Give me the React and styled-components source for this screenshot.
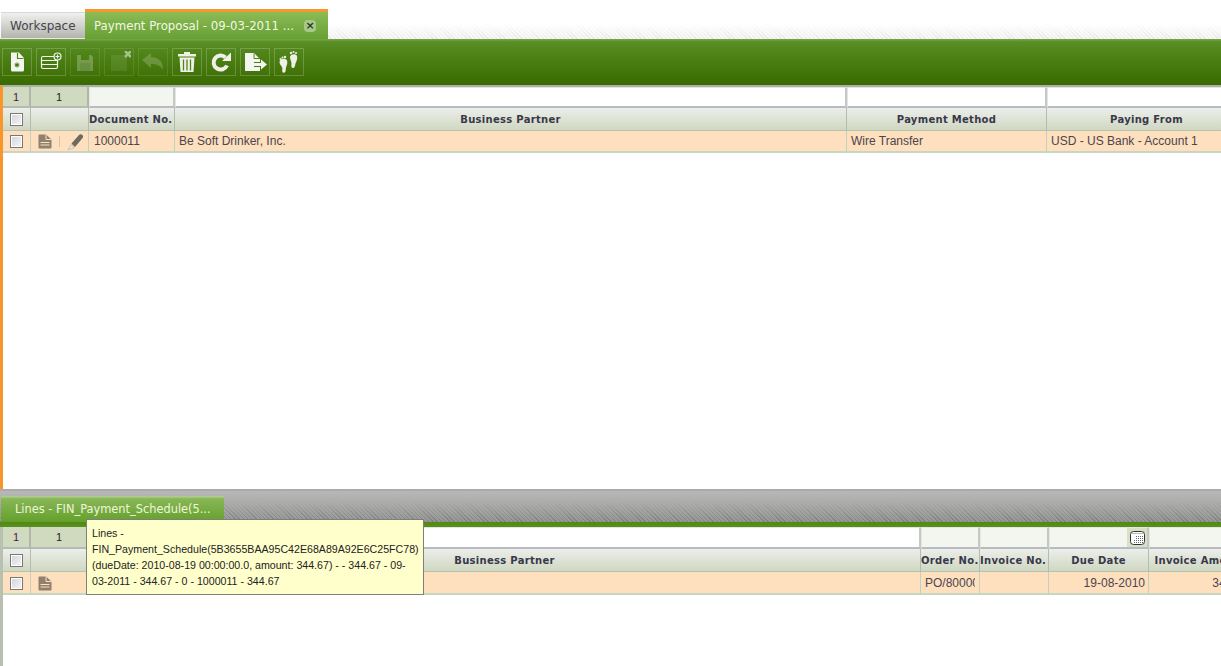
import React from 'react'
import styled, { createGlobalStyle } from 'styled-components'

const GlobalStyle = createGlobalStyle`
html, body { margin: 0; padding: 0; background: #fff; overflow: hidden; }
body { font-family: "Liberation Sans", Arial, sans-serif; }
`

const Page = styled.div`
  width: 1221px;
  height: 666px;
  position: relative;
  overflow: hidden;
  display: flex;
  flex-direction: column;
`

const TabBar = styled.div`
  height: 39px;
  flex: none;
  display: flex;
  align-items: flex-end;
  padding-left: 1px;
  box-sizing: border-box;
  background: linear-gradient(#fff 24px, rgba(255,255,255,0) 39px),
    repeating-linear-gradient(45deg, #e6e6e6 0 1px, #f6f6f6 1px 3px);
`

const Tab = styled.div`
  font-family: "DejaVu Sans", sans-serif;
  font-size: 12px;
  white-space: nowrap;
  display: flex;
  align-items: center;
  box-sizing: border-box;
`

const GrayTab = styled(Tab)`
  width: 84px;
  height: 27px;
  padding-left: 9px;
  color: #45454f;
  background: linear-gradient(#f0f0ee, #b4b4ae);
  border-top: 1px solid #d8d8d8;
  border-bottom: 1px solid #e8e8e8;
`

const ActiveTab = styled(Tab)`
  width: 243px;
  height: 30px;
  padding: 0 12px 0 9px;
  font-size: 11.75px;
  color: #f2f8e2;
  background: linear-gradient(#8dbb55, #66a035);
  border-top: 3px solid #f7962b;
  justify-content: space-between;
`

const CloseBtn = styled.span`
  width: 12px;
  height: 12px;
  border-radius: 4px;
  background: #a5c98a;
  color: #2c3a20;
  font-size: 11px;
  font-weight: 700;
  display: flex;
  align-items: center;
  justify-content: center;
`

const Toolbar = styled.div`
  height: 46px;
  flex: none;
  box-sizing: border-box;
  padding: 9px 0 0 2px;
  display: flex;
  gap: 4px;
  background: linear-gradient(#7aa844 0, #5a8e28 3px, #4f8418 14px, #3a6a00 46px);
`

const ToolBtn = styled.div`
  width: 30px;
  height: 28px;
  box-sizing: border-box;
  border: 1px solid ${p => (p.$dim ? 'rgba(255,255,255,.1)' : 'rgba(255,255,255,.2)')};
  display: flex;
  align-items: center;
  justify-content: center;
  svg { opacity: ${p => p.$dim || 1}; }
`

const TopPane = styled.div`
  height: 404px;
  flex: none;
  box-sizing: border-box;
  border-left: 3px solid #f7962b;
  border-top: 2px solid #a9b0a6;
  background: #fff;
`

const Row = styled.div`
  display: grid;
  grid-template-columns: ${p => p.$cols};
  height: ${p => p.$h}px;
  box-sizing: border-box;
  && > * { padding-top: ${p => (p.$nudge ? '1px' : '0')}; }
`

const CountCell = styled.div`
  background: #d0dabf;
  border-right: 2px solid #b0b6ae;
  border-bottom: 2px solid #b4bab4;
  color: ${p => (p.$dark ? '#222' : '#5a1050')};
  font-size: 11px;
  display: flex;
  align-items: center;
  justify-content: center;
`

const FilterCell = styled.div`
  box-sizing: border-box;
  background: ${p => (p.$on ? '#f3f6ee' : '#fff')};
  border: 1px solid #e4e6e2;
  border-right: 2px solid #c6c8c6;
  border-bottom: 2px solid #b8bcc0;
  display: flex;
  align-items: stretch;
  justify-content: flex-end;
`

const CalendarBox = styled.span`
  width: 20px;
  background: #d8e0c8;
  display: flex;
  align-items: center;
  justify-content: center;
`

const HeadCell = styled.div`
  background: linear-gradient(#eceeea, #cfd8c2);
  border-right: 1px solid #b4bcb0;
  border-bottom: 1px solid #b4c2ae;
  font-family: "DejaVu Sans", sans-serif;
  font-weight: 700;
  font-size: 10px;
  letter-spacing: 0.3px;
  color: #38384a;
  white-space: nowrap;
  overflow: hidden;
  display: flex;
  align-items: center;
  justify-content: ${p => (p.$left ? 'flex-start' : 'center')};
  box-sizing: border-box;
`

const DataCell = styled.div`
  background: #fedfbe;
  border-right: 1px solid #c4d0bc;
  border-bottom: 2px solid #c6d6c0;
  color: #4a4650;
  font-size: 12px;
  white-space: nowrap;
  overflow: hidden;
  display: flex;
  align-items: center;
  justify-content: ${p => (p.$right ? 'flex-end' : 'flex-start')};
  padding-right: ${p => (p.$right ? '3px' : '0')};
  padding-left: ${p => p.$pad || 0}px;
  box-sizing: border-box;
`

const ClippedText = styled.span`
  width: 50px;
  overflow: hidden;
`

const CheckWrap = styled.div`
  width: 100%;
  display: flex;
  align-items: center;
  justify-content: center;
  height: 100%;
`

const CheckBox = styled.span`
  width: 13px;
  height: 13px;
  box-sizing: border-box;
  border: 1px solid #77777c;
  background: linear-gradient(135deg, #d2d4d8, #f6f6f8);
  box-shadow: inset 0 0 0 1px #fff;
`

const IconCell = styled(DataCell)`
  gap: 7px;
  padding-left: 7px;
`

const Sep = styled.span`
  width: 1px;
  height: 11px;
  background: #d8c4ac;
`

const SplitBar = styled.div`
  height: 33px;
  flex: none;
  box-sizing: border-box;
  border-top: 2px solid #aaa;
  padding-left: 1px;
  display: flex;
  align-items: flex-end;
  background: linear-gradient(#b8b8b6 0, rgba(176,176,174,.9) 35%, rgba(140,140,140,0) 100%),
    repeating-linear-gradient(45deg, #7e7e7e 0 1px, #979797 1px 3px);
`

const LinesTab = styled(Tab)`
  width: 223px;
  height: 26px;
  flex: none;
  padding-left: 14px;
  font-size: 11.4px;
  color: #eef6dc;
  background: linear-gradient(#b4d098 0, #88b656 3px, #64a02c);
`

const GreenStrip = styled.div`
  height: 5px;
  flex: none;
  background: linear-gradient(#4f8a12, #5b8f20);
`

const BottomPane = styled.div`
  flex: 1;
  box-sizing: border-box;
  border-left: 3px solid #b8c0b0;
  background: #fff;
`

const Tooltip = styled.div`
  position: absolute;
  left: 86px;
  top: 519px;
  width: 338px;
  height: 76px;
  box-sizing: border-box;
  background: #ffffcc;
  border: 1px solid #7f7f7f;
  padding: 5px 0 0 5px;
  font-size: 10.63px;
  line-height: 16px;
  color: #222;
  white-space: nowrap;
`

const NewDocIcon = () => (
  <svg width="16" height="20" viewBox="0 0 16 20">
    <path d="M2 0.500h8l5 5.500v12a1.500 1.500 0 0 1-1.500 1.500h-10A1.500 1.500 0 0 1 2 18z" fill="#f4f4f0" />
    <path d="M8.500 1v5.500h6" fill="none" stroke="#4f8418" strokeWidth="1.200" />
    <path d="M8 10.500v5M5.800 11.800l4.400 2.500M10.200 11.800l-4.400 2.500" stroke="#3f7a10" strokeWidth="1.100" />
  </svg>
)

const RecordIcon = () => (
  <svg width="14" height="15" viewBox="0 0 14 15">
    <path d="M0.500 1.500a1 1 0 0 1 1-1h6.500l5.500 5v8a1 1 0 0 1-1 1h-11a1 1 0 0 1-1-1z" fill="#8f8070" />
    <path d="M8 0.500v5h5.500" fill="none" stroke="#fedfbe" />
    <path d="M2.500 8.500h9M2.500 11h9" stroke="#fedfbe" />
  </svg>
)

const FormIcon = () => (
  <svg width="24" height="22" viewBox="0 0 24 22">
    <rect x="2.500" y="5.500" width="16" height="12" rx="1.500" fill="none" stroke="#f4f4f0" strokeWidth="1.200" />
    <path d="M3 9.500h15M3 13.500h15" stroke="#f4f4f0" strokeWidth="1.200" />
    <circle cx="18.500" cy="5.500" r="3.500" fill="#4f8418" stroke="#f4f4f0" strokeWidth="1.200" />
    <path d="M18.500 3.500v4M16.500 5.500h4" stroke="#f4f4f0" />
  </svg>
)

const SaveIcon = () => (
  <svg width="24" height="22" viewBox="0 0 24 22">
    <path d="M4 4h14l2 2v14H4z" fill="#e8e8e0" />
    <rect x="8" y="4" width="8" height="5" fill="#4f8418" />
    <rect x="7" y="12" width="10" height="8" fill="#c8c8c0" />
  </svg>
)

const SaveCloseIcon = () => (
  <svg width="24" height="22" viewBox="0 0 24 22">
    <path d="M4 4h14l2 2v14H4z" fill="#e8e8e0" opacity=".2" />
    <path d="M18 0l6 6M24 0l-6 6" stroke="#fff" strokeWidth="2.500" />
  </svg>
)

const UndoIcon = () => (
  <svg width="24" height="22" viewBox="0 0 24 22">
    <path d="M1 9l9-7v4c8 0 12 5 12 13-2-4-6-6-12-6v4z" fill="#e8e8e0" />
  </svg>
)

const TrashIcon = () => (
  <svg width="20" height="22" viewBox="0 0 20 22">
    <path d="M1 3h18v2.400H1zM7 1h6v2H7z" fill="#f0f0e8" />
    <path d="M2.500 6.500h15l-1 14.500h-13z" fill="#f0f0e8" />
    <path d="M6.500 8.500v11M10 8.500v11M13.500 8.500v11" stroke="#4f8418" strokeWidth="1.300" />
  </svg>
)

const RefreshIcon = () => (
  <svg width="22" height="22" viewBox="0 0 22 22">
    <path d="M17 14.500A7 7 0 1 1 15.500 6.500" fill="none" stroke="#f0f0e8" strokeWidth="4" />
    <path d="M12 10h9V1.500z" fill="#f0f0e8" />
  </svg>
)

const ExportIcon = () => (
  <svg width="24" height="22" viewBox="0 0 24 22">
    <path d="M2 2h9l6 6v3h-6v5h6v4H2z" fill="#f4f4f0" />
    <path d="M11 2.500v5h6" fill="none" stroke="#4f8418" />
    <path d="M10 12h8V8.500l6 5-6 5V15h-8z" fill="#f4f4f0" />
  </svg>
)

const FeetIcon = () => (
  <svg width="22" height="24" viewBox="0 0 22 24">
    <path d="M1.500 12c0-3 6-4.500 7.500-1.500 1 2.500-.5 5-1 7-.4 2 .2 5-2 5.200-2.500.2-1.500-3-1.700-5C3.500 15.800 1.500 14.500 1.500 12z" fill="#f0f0e8" />
    <path d="M12 7c0-3 6-4 7-1 .8 3-.8 5.500-1.500 7.500-.5 2-.5 4.500-2.500 4.500-2.300 0-1.400-3-1.600-5C13.200 10.800 12 9 12 7z" fill="#f0f0e8" />
    <g fill="#f0f0e8">
      <circle cx="2.500" cy="9" r="1" />
      <circle cx="4.500" cy="7.500" r="1" />
      <circle cx="7" cy="7" r="1.200" />
      <circle cx="13" cy="3" r="1.200" />
      <circle cx="15.500" cy="2" r="1" />
      <circle cx="18" cy="3" r="1" />
    </g>
  </svg>
)

const PencilIcon = () => (
  <svg width="17" height="17" viewBox="0 0 17 17">
    <path d="M4.500 10.500l7.500-8.500c1-1 2.500-.8 3.400 0s1 2.200 0 3.300l-7.400 8.700z" fill="#6d6a62" />
    <path d="M4 11.500l3.500 3L1 17z" fill="#efe6d6" stroke="#a8a294" strokeWidth=".5" />
  </svg>
)

const CalendarIcon = () => (
  <svg width="15" height="14" viewBox="0 0 15 14">
    <rect x="0.500" y="0.500" width="14" height="13" rx="3" fill="#fff" stroke="#333" />
    <path d="M1 2.500h13" stroke="#bbb" />
    <path d="M6 5.500h7M6 7.500h7M4 9.500h9M4 11.500h9" stroke="#666" strokeDasharray="1 1" />
  </svg>
)

const topCols = '28px 58px 86px 672px 200px 200px'
const bottomCols = '28px 58px 832px 59px 69px 100px 104px'

const toolIcons = [
  { id: 'new', icon: <NewDocIcon /> },
  { id: 'form', icon: <FormIcon /> },
  { id: 'save', icon: <SaveIcon />, dim: 0.28 },
  { id: 'saveClose', icon: <SaveCloseIcon />, dim: 0.5 },
  { id: 'undo', icon: <UndoIcon />, dim: 0.22 },
  { id: 'delete', icon: <TrashIcon /> },
  { id: 'refresh', icon: <RefreshIcon /> },
  { id: 'export', icon: <ExportIcon /> },
  { id: 'audit', icon: <FeetIcon /> },
]

const Check = () => (
  <CheckWrap>
    <CheckBox />
  </CheckWrap>
)

const App = () => {
  return (
    <Page>
      <GlobalStyle />
      <TabBar>
        <GrayTab>Workspace</GrayTab>
        <ActiveTab>
          <span>Payment Proposal - 09-03-2011 ...</span>
          <CloseBtn>×</CloseBtn>
        </ActiveTab>
      </TabBar>

      <Toolbar>
        {toolIcons.map(t => (
          <ToolBtn key={t.id} $dim={t.dim}>
            {t.icon}
          </ToolBtn>
        ))}
      </Toolbar>

      <TopPane>
        <Row $cols={topCols} $h={21}>
          <CountCell>1</CountCell>
          <CountCell $dark>1</CountCell>
          <FilterCell $on />
          <FilterCell />
          <FilterCell />
          <FilterCell />
        </Row>
        <Row $cols={topCols} $h={23}>
          <HeadCell><Check /></HeadCell>
          <HeadCell />
          <HeadCell $left>Document No.</HeadCell>
          <HeadCell>Business Partner</HeadCell>
          <HeadCell>Payment Method</HeadCell>
          <HeadCell>Paying From</HeadCell>
        </Row>
        <Row $cols={topCols} $h={22}>
          <DataCell><Check /></DataCell>
          <IconCell>
            <RecordIcon />
            <Sep />
            <PencilIcon />
          </IconCell>
          <DataCell $pad={5}>1000011</DataCell>
          <DataCell $pad={4}>Be Soft Drinker, Inc.</DataCell>
          <DataCell $pad={4}>Wire Transfer</DataCell>
          <DataCell $pad={4}>USD - US Bank - Account 1</DataCell>
        </Row>
      </TopPane>

      <SplitBar>
        <LinesTab>Lines - FIN_Payment_Schedule(5...</LinesTab>
      </SplitBar>
      <GreenStrip />

      <BottomPane>
        <Row $cols={bottomCols} $h={22}>
          <CountCell>1</CountCell>
          <CountCell $dark>1</CountCell>
          <FilterCell />
          <FilterCell $on />
          <FilterCell $on />
          <FilterCell $on>
            <CalendarBox><CalendarIcon /></CalendarBox>
          </FilterCell>
          <FilterCell $on />
        </Row>
        <Row $cols={bottomCols} $h={23} $nudge>
          <HeadCell><Check /></HeadCell>
          <HeadCell />
          <HeadCell>Business Partner</HeadCell>
          <HeadCell $left>Order No.</HeadCell>
          <HeadCell $left>Invoice No.</HeadCell>
          <HeadCell>Due Date</HeadCell>
          <HeadCell>Invoice Amount</HeadCell>
        </Row>
        <Row $cols={bottomCols} $h={23} $nudge>
          <DataCell><Check /></DataCell>
          <IconCell>
            <RecordIcon />
          </IconCell>
          <DataCell />
          <DataCell $pad={4}><ClippedText>PO/80000</ClippedText></DataCell>
          <DataCell />
          <DataCell $right>19-08-2010</DataCell>
          <DataCell $right>344.67</DataCell>
        </Row>
      </BottomPane>

      <Tooltip>
        Lines -<br />
        FIN_Payment_Schedule(5B3655BAA95C42E68A89A92E6C25FC78)<br />
        (dueDate: 2010-08-19 00:00:00.0, amount: 344.67) - - 344.67 - 09-<br />
        03-2011 - 344.67 - 0 - 1000011 - 344.67
      </Tooltip>
    </Page>
  )
}

export default App
